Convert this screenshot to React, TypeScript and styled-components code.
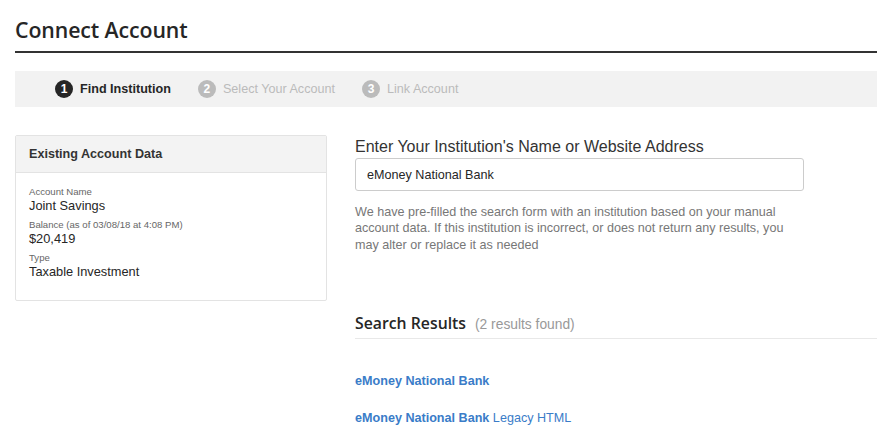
import React from 'react';
import styled, { createGlobalStyle } from 'styled-components';

const GlobalStyle = createGlobalStyle`
  body {
    margin: 0;
    background: #fff;
    font-family: 'Liberation Sans', Arial, sans-serif;
    color: #333;
  }
`;

const Page = styled.div`
  padding: 0 16px 0 15px;
`;

const Title = styled.h1`
  margin: 0;
  padding-top: 16px;
  padding-bottom: 7px;
  font-family: 'Open Sans', sans-serif;
  font-weight: 600;
  font-size: 21.3px;
  letter-spacing: -0.1px;
  line-height: 28px;
  color: #262626;
  border-bottom: 2px solid #333;
`;

const StepBar = styled.div`
  display: flex;
  align-items: center;
  gap: 27px;
  height: 36px;
  margin-top: 18px;
  padding-left: 40px;
  background: #f2f2f2;
`;

const Step = styled.div<{ active?: boolean }>`
  display: flex;
  align-items: center;
  font-size: 12.6px;
  font-weight: ${({ active }) => (active ? 700 : 400)};
  color: ${({ active }) => (active ? '#262626' : '#bbb')};
`;

const StepNum = styled.span<{ active?: boolean }>`
  display: inline-flex;
  align-items: center;
  justify-content: center;
  width: 18px;
  height: 18px;
  margin-right: 7px;
  border-radius: 50%;
  background: ${({ active }) => (active ? '#262626' : '#bbb')};
  color: #fff;
  font-size: 12px;
  font-weight: 700;
`;

const Columns = styled.div`
  display: flex;
  align-items: flex-start;
  gap: 28px;
  margin-top: 28px;
`;

const Card = styled.div`
  flex: 0 0 312px;
  box-sizing: border-box;
  border: 1px solid #e3e3e3;
  border-radius: 2px;
`;

const CardHeader = styled.div`
  height: 36px;
  display: flex;
  align-items: center;
  padding-left: 13px;
  background: #f3f3f3;
  border-bottom: 1px solid #e3e3e3;
  font-size: 12.6px;
  font-weight: 700;
  color: #333;
`;

const CardBody = styled.div`
  padding: 13px 13px 15px;
`;

const FieldLabel = styled.div`
  font-size: 9.6px;
  line-height: 12px;
  color: #666;
`;

const FieldValue = styled.div`
  font-size: 12.8px;
  line-height: 16px;
  color: #262626;
  margin-bottom: 5px;
`;

const Main = styled.div`
  flex: 1;
  padding-top: 2px;
`;

const Label = styled.div`
  font-size: 16px;
  line-height: 19px;
  color: #333;
  margin-bottom: 2px;
`;

const Input = styled.input`
  display: block;
  box-sizing: border-box;
  width: 449px;
  height: 33px;
  padding: 0 11px;
  border: 1px solid #ccc;
  border-radius: 3px;
  font-family: 'Liberation Sans', Arial, sans-serif;
  font-size: 12.6px;
  color: #262626;
  outline: none;
`;

const Help = styled.p`
  margin: 13px 0 0;
  width: 450px;
  font-size: 12.6px;
  line-height: 16.3px;
  color: #777;
`;

const ResultsHeader = styled.div`
  display: flex;
  align-items: baseline;
  margin-top: 59px;
  padding-bottom: 4px;
  border-bottom: 1px solid #e8e8e8;
`;

const ResultsTitle = styled.h2`
  margin: 0;
  font-family: 'Open Sans', sans-serif;
  font-weight: 600;
  font-size: 15.8px;
  line-height: 22px;
  color: #262626;
`;

const ResultsCount = styled.span`
  margin-left: 9px;
  font-size: 13.8px;
  color: #999;
`;

const ResultList = styled.div`
  display: flex;
  flex-direction: column;
  gap: 22px;
  margin-top: 35px;
`;

const ResultLink = styled.a`
  font-size: 12.6px;
  line-height: 15px;
  color: #3a7cc8;
  text-decoration: none;
  cursor: pointer;

  b {
    font-weight: 700;
  }
`;

const steps = ['Find Institution', 'Select Your Account', 'Link Account'];

const App = () => (
  <Page>
    <GlobalStyle />
    <Title>Connect Account</Title>
    <StepBar>
      {steps.map((s, i) => (
        <Step key={s} active={i === 0}>
          <StepNum active={i === 0}>{i + 1}</StepNum>
          {s}
        </Step>
      ))}
    </StepBar>
    <Columns>
      <Card>
        <CardHeader>Existing Account Data</CardHeader>
        <CardBody>
          <FieldLabel>Account Name</FieldLabel>
          <FieldValue>Joint Savings</FieldValue>
          <FieldLabel>Balance (as of 03/08/18 at 4:08 PM)</FieldLabel>
          <FieldValue>$20,419</FieldValue>
          <FieldLabel>Type</FieldLabel>
          <FieldValue>Taxable Investment</FieldValue>
        </CardBody>
      </Card>
      <Main>
        <Label>Enter Your Institution's Name or Website Address</Label>
        <Input defaultValue="eMoney National Bank" />
        <Help>
          We have pre-filled the search form with an institution based on your manual account data. If this
          institution is incorrect, or does not return any results, you may alter or replace it as needed
        </Help>
        <ResultsHeader>
          <ResultsTitle>Search Results</ResultsTitle>
          <ResultsCount>(2 results found)</ResultsCount>
        </ResultsHeader>
        <ResultList>
          <ResultLink>
            <b>eMoney National Bank</b>
          </ResultLink>
          <ResultLink>
            <b>eMoney National Bank</b> Legacy HTML
          </ResultLink>
        </ResultList>
      </Main>
    </Columns>
  </Page>
);

export default App;
